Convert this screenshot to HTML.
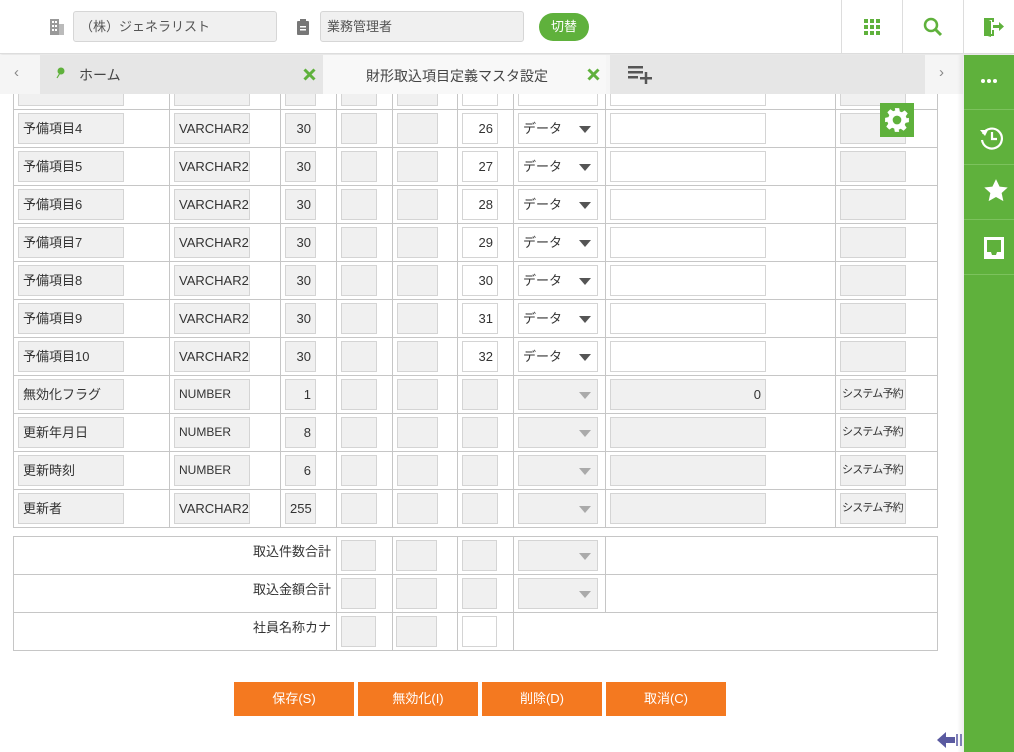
<!DOCTYPE html>
<html><head><meta charset="utf-8"><style>
*{margin:0;padding:0;box-sizing:border-box}
body{width:1014px;height:752px;overflow:hidden;background:#fff;font-family:"Liberation Sans","Noto Sans CJK JP",sans-serif;font-size:13px;color:#333;position:relative}
.a{position:absolute}
.hdr{left:0;top:0;width:1014px;height:54px;background:#fff;border-bottom:1px solid #ddd;box-shadow:0 1px 3px rgba(0,0,0,.15)}
.fld{position:absolute;top:11px;height:31px;border:1px solid #d6d6d6;background:#f0f0f0;border-radius:3px;line-height:29px;padding-left:6px;font-size:13px;color:#555}
.tbar{left:0;top:55px;width:963px;height:39px;background:#f5f5f5}
.sb{left:964px;top:55px;width:50px;height:697px;background:#5fb13c}
.sbi{position:absolute;left:0;width:50px;border-bottom:1px solid #7cc25d}
.vl{position:absolute;width:1px;background:#c6c6c6}
.hl{position:absolute;height:1px;background:#c6c6c6;left:13px;width:925px}
.b{position:absolute;height:31px;border:1px solid #d4d4d4;background:#f0f0f0;line-height:29px;padding:0 4px;font-size:13px;white-space:nowrap;overflow:hidden}
.w{background:#fff}
.rt{text-align:right}
.sy{font-size:11px;letter-spacing:-0.8px;padding:0 1px}
.arr{position:absolute;right:6px;top:12px;width:0;height:0;border-left:6px solid transparent;border-right:6px solid transparent;border-top:7px solid #555}
.arr.g{border-top-color:#aaa}
.btn{position:absolute;top:682px;width:120px;height:34px;background:#f47920;color:#fff;text-align:center;line-height:34px;font-size:13px}
</style></head><body>

<div class="a hdr">
  <svg class="a" style="left:50px;top:19px" width="14" height="16" viewBox="0 0 14 16"><rect x="0" y="0" width="9" height="16" fill="#999"/><rect x="9" y="5" width="5" height="11" fill="#bbb"/><g fill="#fff"><rect x="2" y="2" width="2" height="2"/><rect x="5" y="2" width="2" height="2"/><rect x="2" y="6" width="2" height="2"/><rect x="5" y="6" width="2" height="2"/><rect x="2" y="10" width="2" height="2"/><rect x="5" y="10" width="2" height="2"/></g></svg>
  <div class="fld" style="left:73px;width:204px">（株）ジェネラリスト</div>
  <svg class="a" style="left:297px;top:19px" width="12" height="16" viewBox="0 0 12 16"><rect x="0" y="2" width="12" height="14" rx="1" fill="#777"/><rect x="3" y="0" width="6" height="4" fill="#777"/><rect x="3" y="7" width="6" height="1.5" fill="#fff"/><rect x="3" y="10" width="6" height="1.5" fill="#fff"/></svg>
  <div class="fld" style="left:320px;width:204px">業務管理者</div>
  <div class="a" style="left:539px;top:13px;width:50px;height:28px;border-radius:14px;background:#5fb13c;color:#fff;text-align:center;line-height:28px;font-size:13px">切替</div>
  <div class="vl" style="left:841px;top:0;height:54px;background:#ddd"></div>
  <div class="vl" style="left:902px;top:0;height:54px;background:#ddd"></div>
  <div class="vl" style="left:963px;top:0;height:54px;background:#ddd"></div>
  <svg class="a" style="left:864px;top:19px" width="16" height="16" viewBox="0 0 16 16" fill="#5fb13c"><rect x="0" y="0" width="4" height="4"/><rect x="6" y="0" width="4" height="4"/><rect x="12" y="0" width="4" height="4"/><rect x="0" y="6" width="4" height="4"/><rect x="6" y="6" width="4" height="4"/><rect x="12" y="6" width="4" height="4"/><rect x="0" y="12" width="4" height="4"/><rect x="6" y="12" width="4" height="4"/><rect x="12" y="12" width="4" height="4"/></svg>
  <svg class="a" style="left:923px;top:17px" width="20" height="20" viewBox="0 0 20 20"><circle cx="8" cy="8" r="6" stroke="#5fb13c" stroke-width="2.5" fill="none"/><line x1="12.5" y1="12.5" x2="18" y2="18" stroke="#5fb13c" stroke-width="3"/></svg>
  <svg class="a" style="left:983px;top:16px" width="22" height="22" viewBox="0 0 22 22"><path d="M1 2h10v4H9V4H5v14h4v-4h2v6H1z" fill="#5fb13c"/><path d="M1 2l7 3v16l-7-2z" fill="#5fb13c"/><path d="M10 9h6V6l5 4.5-5 4.5v-3h-6z" fill="#5fb13c"/></svg>
</div>

<div class="a tbar"></div>
<div class="a" style="left:14px;top:64px;color:#888;font-size:15px">‹</div>
<div class="a" style="left:40px;top:55px;width:283px;height:39px;background:#e6e6e6"></div>
<svg class="a" style="left:55px;top:67px" width="10" height="12" viewBox="0 0 10 12"><circle cx="6" cy="4" r="3.5" fill="#5fb13c"/><line x1="5" y1="6" x2="2" y2="11" stroke="#5fb13c" stroke-width="1.2"/></svg>
<div class="a" style="left:79px;top:65px;font-size:14px;color:#444">ホーム</div>
<svg class="a" style="left:303px;top:68px" width="13" height="13" viewBox="0 0 13 13"><path d="M1.5 1.5l10 10M11.5 1.5l-10 10" stroke="#5fb13c" stroke-width="3"/></svg>
<div class="a" style="left:323px;top:55px;width:283px;height:39px;background:#f8f8f8"></div>
<div class="a" style="left:366px;top:66px;font-size:14px;color:#444">財形取込項目定義マスタ設定</div>
<svg class="a" style="left:587px;top:68px" width="13" height="13" viewBox="0 0 13 13"><path d="M1.5 1.5l10 10M11.5 1.5l-10 10" stroke="#5fb13c" stroke-width="3"/></svg>
<div class="a" style="left:610px;top:55px;width:315px;height:39px;background:#e6e6e6"></div>
<svg class="a" style="left:628px;top:66px" width="24" height="18" viewBox="0 0 24 18" fill="#555"><rect x="0" y="0" width="15" height="2.5"/><rect x="0" y="5" width="15" height="2.5"/><rect x="0" y="10" width="10" height="2.5"/><rect x="12" y="11" width="12" height="2.5"/><rect x="16.75" y="6" width="2.5" height="12"/></svg>
<div class="a" style="left:939px;top:64px;color:#888;font-size:15px">›</div>

<div class="a sb">
  <div class="sbi" style="top:0;height:55px"><svg class="a" style="left:17px;top:24px" width="16" height="4"><circle cx="2" cy="2" r="2" fill="#fff"/><circle cx="8" cy="2" r="2" fill="#fff"/><circle cx="14" cy="2" r="2" fill="#fff"/></svg></div>
  <div class="sbi" style="top:55px;height:55px"><svg class="a" style="left:15px;top:15px" width="26" height="26" viewBox="0 0 26 26"><path d="M4 9A10 10 0 1 1 3 15" stroke="#fff" stroke-width="2.2" fill="none"/><path d="M1 5l5 6 3-6z" fill="#fff"/><path d="M13 7v7h5" stroke="#fff" stroke-width="2.2" fill="none"/></svg></div>
  <div class="sbi" style="top:110px;height:55px"><svg class="a" style="left:19px;top:13px" width="26" height="26" viewBox="0 0 24 24"><path d="M12 1l3.3 7 7.5.8-5.6 5 1.6 7.5L12 17.5 5.2 21.3l1.6-7.5-5.6-5 7.5-.8z" fill="#fff"/></svg></div>
  <div class="sbi" style="top:165px;height:55px"><svg class="a" style="left:18px;top:15px" width="24" height="26" viewBox="0 0 24 26"><path d="M2 2h20v22H2z M5 5v12h4l1 3h4l1-3h4V5z" fill="#fff" fill-rule="evenodd"/></svg></div>
</div>
<div class="a" style="left:957px;top:55px;width:7px;height:697px;background:linear-gradient(to right,rgba(0,0,0,0),rgba(0,0,0,.07))"></div>

<div class="vl" style="left:13px;top:94px;height:434px"></div>
<div class="vl" style="left:169px;top:94px;height:434px"></div>
<div class="vl" style="left:280px;top:94px;height:434px"></div>
<div class="vl" style="left:336px;top:94px;height:434px"></div>
<div class="vl" style="left:392px;top:94px;height:434px"></div>
<div class="vl" style="left:457px;top:94px;height:434px"></div>
<div class="vl" style="left:513px;top:94px;height:434px"></div>
<div class="vl" style="left:605px;top:94px;height:434px"></div>
<div class="vl" style="left:835px;top:94px;height:434px"></div>
<div class="vl" style="left:937px;top:94px;height:434px"></div>
<div class="hl" style="top:109px"></div><div class="hl" style="top:147px"></div><div class="hl" style="top:185px"></div><div class="hl" style="top:223px"></div><div class="hl" style="top:261px"></div><div class="hl" style="top:299px"></div><div class="hl" style="top:337px"></div><div class="hl" style="top:375px"></div><div class="hl" style="top:413px"></div><div class="hl" style="top:451px"></div><div class="hl" style="top:489px"></div><div class="hl" style="top:527px"></div>

<div class="b" style="left:18px;top:94px;width:106px;height:12px;border-top:0"></div>
<div class="b" style="left:174px;top:94px;width:76px;height:12px;border-top:0"></div>
<div class="b" style="left:285px;top:94px;width:31px;height:12px;border-top:0"></div>
<div class="b" style="left:341px;top:94px;width:36px;height:12px;border-top:0"></div>
<div class="b" style="left:397px;top:94px;width:41px;height:12px;border-top:0"></div>
<div class="b w" style="left:462px;top:94px;width:36px;height:12px;border-top:0"></div>
<div class="b w" style="left:518px;top:94px;width:80px;height:12px;border-top:0"></div>
<div class="b w" style="left:610px;top:94px;width:156px;height:12px;border-top:0"></div>
<div class="b" style="left:840px;top:94px;width:66px;height:12px;border-top:0"></div>

<div class="a" style="left:0;top:113px;width:940px;height:31px">
<div class="b" style="left:18px;width:106px">予備項目4</div><div class="b" style="left:174px;width:76px">VARCHAR2</div><div class="b rt" style="left:285px;width:31px">30</div><div class="b" style="left:341px;width:36px"></div><div class="b" style="left:397px;width:41px"></div><div class="b w rt" style="left:462px;width:36px">26</div><div class="b w" style="left:518px;width:80px">データ<span class="arr"></span></div><div class="b w" style="left:610px;width:156px"></div><div class="b" style="left:840px;width:66px"></div></div>
<div class="a" style="left:0;top:151px;width:940px;height:31px">
<div class="b" style="left:18px;width:106px">予備項目5</div><div class="b" style="left:174px;width:76px">VARCHAR2</div><div class="b rt" style="left:285px;width:31px">30</div><div class="b" style="left:341px;width:36px"></div><div class="b" style="left:397px;width:41px"></div><div class="b w rt" style="left:462px;width:36px">27</div><div class="b w" style="left:518px;width:80px">データ<span class="arr"></span></div><div class="b w" style="left:610px;width:156px"></div><div class="b" style="left:840px;width:66px"></div></div>
<div class="a" style="left:0;top:189px;width:940px;height:31px">
<div class="b" style="left:18px;width:106px">予備項目6</div><div class="b" style="left:174px;width:76px">VARCHAR2</div><div class="b rt" style="left:285px;width:31px">30</div><div class="b" style="left:341px;width:36px"></div><div class="b" style="left:397px;width:41px"></div><div class="b w rt" style="left:462px;width:36px">28</div><div class="b w" style="left:518px;width:80px">データ<span class="arr"></span></div><div class="b w" style="left:610px;width:156px"></div><div class="b" style="left:840px;width:66px"></div></div>
<div class="a" style="left:0;top:227px;width:940px;height:31px">
<div class="b" style="left:18px;width:106px">予備項目7</div><div class="b" style="left:174px;width:76px">VARCHAR2</div><div class="b rt" style="left:285px;width:31px">30</div><div class="b" style="left:341px;width:36px"></div><div class="b" style="left:397px;width:41px"></div><div class="b w rt" style="left:462px;width:36px">29</div><div class="b w" style="left:518px;width:80px">データ<span class="arr"></span></div><div class="b w" style="left:610px;width:156px"></div><div class="b" style="left:840px;width:66px"></div></div>
<div class="a" style="left:0;top:265px;width:940px;height:31px">
<div class="b" style="left:18px;width:106px">予備項目8</div><div class="b" style="left:174px;width:76px">VARCHAR2</div><div class="b rt" style="left:285px;width:31px">30</div><div class="b" style="left:341px;width:36px"></div><div class="b" style="left:397px;width:41px"></div><div class="b w rt" style="left:462px;width:36px">30</div><div class="b w" style="left:518px;width:80px">データ<span class="arr"></span></div><div class="b w" style="left:610px;width:156px"></div><div class="b" style="left:840px;width:66px"></div></div>
<div class="a" style="left:0;top:303px;width:940px;height:31px">
<div class="b" style="left:18px;width:106px">予備項目9</div><div class="b" style="left:174px;width:76px">VARCHAR2</div><div class="b rt" style="left:285px;width:31px">30</div><div class="b" style="left:341px;width:36px"></div><div class="b" style="left:397px;width:41px"></div><div class="b w rt" style="left:462px;width:36px">31</div><div class="b w" style="left:518px;width:80px">データ<span class="arr"></span></div><div class="b w" style="left:610px;width:156px"></div><div class="b" style="left:840px;width:66px"></div></div>
<div class="a" style="left:0;top:341px;width:940px;height:31px">
<div class="b" style="left:18px;width:106px">予備項目10</div><div class="b" style="left:174px;width:76px">VARCHAR2</div><div class="b rt" style="left:285px;width:31px">30</div><div class="b" style="left:341px;width:36px"></div><div class="b" style="left:397px;width:41px"></div><div class="b w rt" style="left:462px;width:36px">32</div><div class="b w" style="left:518px;width:80px">データ<span class="arr"></span></div><div class="b w" style="left:610px;width:156px"></div><div class="b" style="left:840px;width:66px"></div></div>
<div class="a" style="left:0;top:379px;width:940px;height:31px">
<div class="b" style="left:18px;width:106px">無効化フラグ</div><div class="b" style="left:174px;width:76px;font-size:12px">NUMBER</div><div class="b rt" style="left:285px;width:31px">1</div><div class="b" style="left:341px;width:36px"></div><div class="b" style="left:397px;width:41px"></div><div class="b" style="left:462px;width:36px"></div><div class="b" style="left:518px;width:80px"><span class="arr g"></span></div><div class="b rt" style="left:610px;width:156px">0</div><div class="b sy" style="left:840px;width:66px">システム予約</div></div>
<div class="a" style="left:0;top:417px;width:940px;height:31px">
<div class="b" style="left:18px;width:106px">更新年月日</div><div class="b" style="left:174px;width:76px;font-size:12px">NUMBER</div><div class="b rt" style="left:285px;width:31px">8</div><div class="b" style="left:341px;width:36px"></div><div class="b" style="left:397px;width:41px"></div><div class="b" style="left:462px;width:36px"></div><div class="b" style="left:518px;width:80px"><span class="arr g"></span></div><div class="b" style="left:610px;width:156px"></div><div class="b sy" style="left:840px;width:66px">システム予約</div></div>
<div class="a" style="left:0;top:455px;width:940px;height:31px">
<div class="b" style="left:18px;width:106px">更新時刻</div><div class="b" style="left:174px;width:76px;font-size:12px">NUMBER</div><div class="b rt" style="left:285px;width:31px">6</div><div class="b" style="left:341px;width:36px"></div><div class="b" style="left:397px;width:41px"></div><div class="b" style="left:462px;width:36px"></div><div class="b" style="left:518px;width:80px"><span class="arr g"></span></div><div class="b" style="left:610px;width:156px"></div><div class="b sy" style="left:840px;width:66px">システム予約</div></div>
<div class="a" style="left:0;top:493px;width:940px;height:31px">
<div class="b" style="left:18px;width:106px">更新者</div><div class="b" style="left:174px;width:76px">VARCHAR2</div><div class="b rt" style="left:285px;width:31px">255</div><div class="b" style="left:341px;width:36px"></div><div class="b" style="left:397px;width:41px"></div><div class="b" style="left:462px;width:36px"></div><div class="b" style="left:518px;width:80px"><span class="arr g"></span></div><div class="b" style="left:610px;width:156px"></div><div class="b sy" style="left:840px;width:66px">システム予約</div></div>

<div class="a" style="left:880px;top:103px;width:34px;height:34px;background:#5fb13c"></div>
<svg class="a" style="left:884px;top:107px" width="26" height="26" viewBox="0 0 24 24"><path fill="#fff" fill-rule="evenodd" d="M10 1h4l.6 3.1 1.9.8 2.6-1.8 2.8 2.8-1.8 2.6.8 1.9L23 10v4l-3.1.6-.8 1.9 1.8 2.6-2.8 2.8-2.6-1.8-1.9.8L14 23h-4l-.6-3.1-1.9-.8-2.6 1.8-2.8-2.8 1.8-2.6-.8-1.9L1 14v-4l3.1-.6.8-1.9-1.8-2.6 2.8-2.8 2.6 1.8 1.9-.8zM12 8a4 4 0 1 0 0 8 4 4 0 1 0 0-8z"/></svg>

<div class="hl" style="top:536px"></div><div class="hl" style="top:574px"></div><div class="hl" style="top:612px"></div><div class="hl" style="top:650px"></div>
<div class="vl" style="left:13px;top:536px;height:115px"></div>
<div class="vl" style="left:937px;top:536px;height:115px"></div>
<div class="vl" style="left:336px;top:536px;height:115px"></div>
<div class="vl" style="left:392px;top:536px;height:115px"></div>
<div class="vl" style="left:457px;top:536px;height:115px"></div>
<div class="vl" style="left:513px;top:536px;height:115px"></div>
<div class="vl" style="left:605px;top:536px;height:77px"></div>
<div class="a" style="left:200px;top:541px;width:131px;text-align:right">取込件数合計</div>
<div class="a" style="left:200px;top:579px;width:131px;text-align:right">取込金額合計</div>
<div class="a" style="left:200px;top:617px;width:131px;text-align:right">社員名称カナ</div>
<div class="b" style="left:341px;top:540px;width:35px"></div><div class="b" style="left:396px;top:540px;width:41px"></div><div class="b" style="left:462px;top:540px;width:35px"></div><div class="b" style="left:518px;top:540px;width:80px"><span class="arr g"></span></div>
<div class="b" style="left:341px;top:578px;width:35px"></div><div class="b" style="left:396px;top:578px;width:41px"></div><div class="b" style="left:462px;top:578px;width:35px"></div><div class="b" style="left:518px;top:578px;width:80px"><span class="arr g"></span></div>
<div class="b" style="left:341px;top:616px;width:35px"></div><div class="b" style="left:396px;top:616px;width:41px"></div><div class="b w" style="left:462px;top:616px;width:35px"></div>

<div class="btn" style="left:234px">保存(S)</div>
<div class="btn" style="left:358px">無効化(I)</div>
<div class="btn" style="left:482px">削除(D)</div>
<div class="btn" style="left:606px">取消(C)</div>

<svg class="a" style="left:937px;top:730px" width="26" height="20" viewBox="0 0 26 20"><path d="M0 10l9-8v5h9v6H9v5z" fill="#5a5aa0"/><rect x="19" y="4" width="2" height="12" fill="#8080b8"/><rect x="23" y="4" width="2" height="12" fill="#8080b8"/></svg>
</body></html>
